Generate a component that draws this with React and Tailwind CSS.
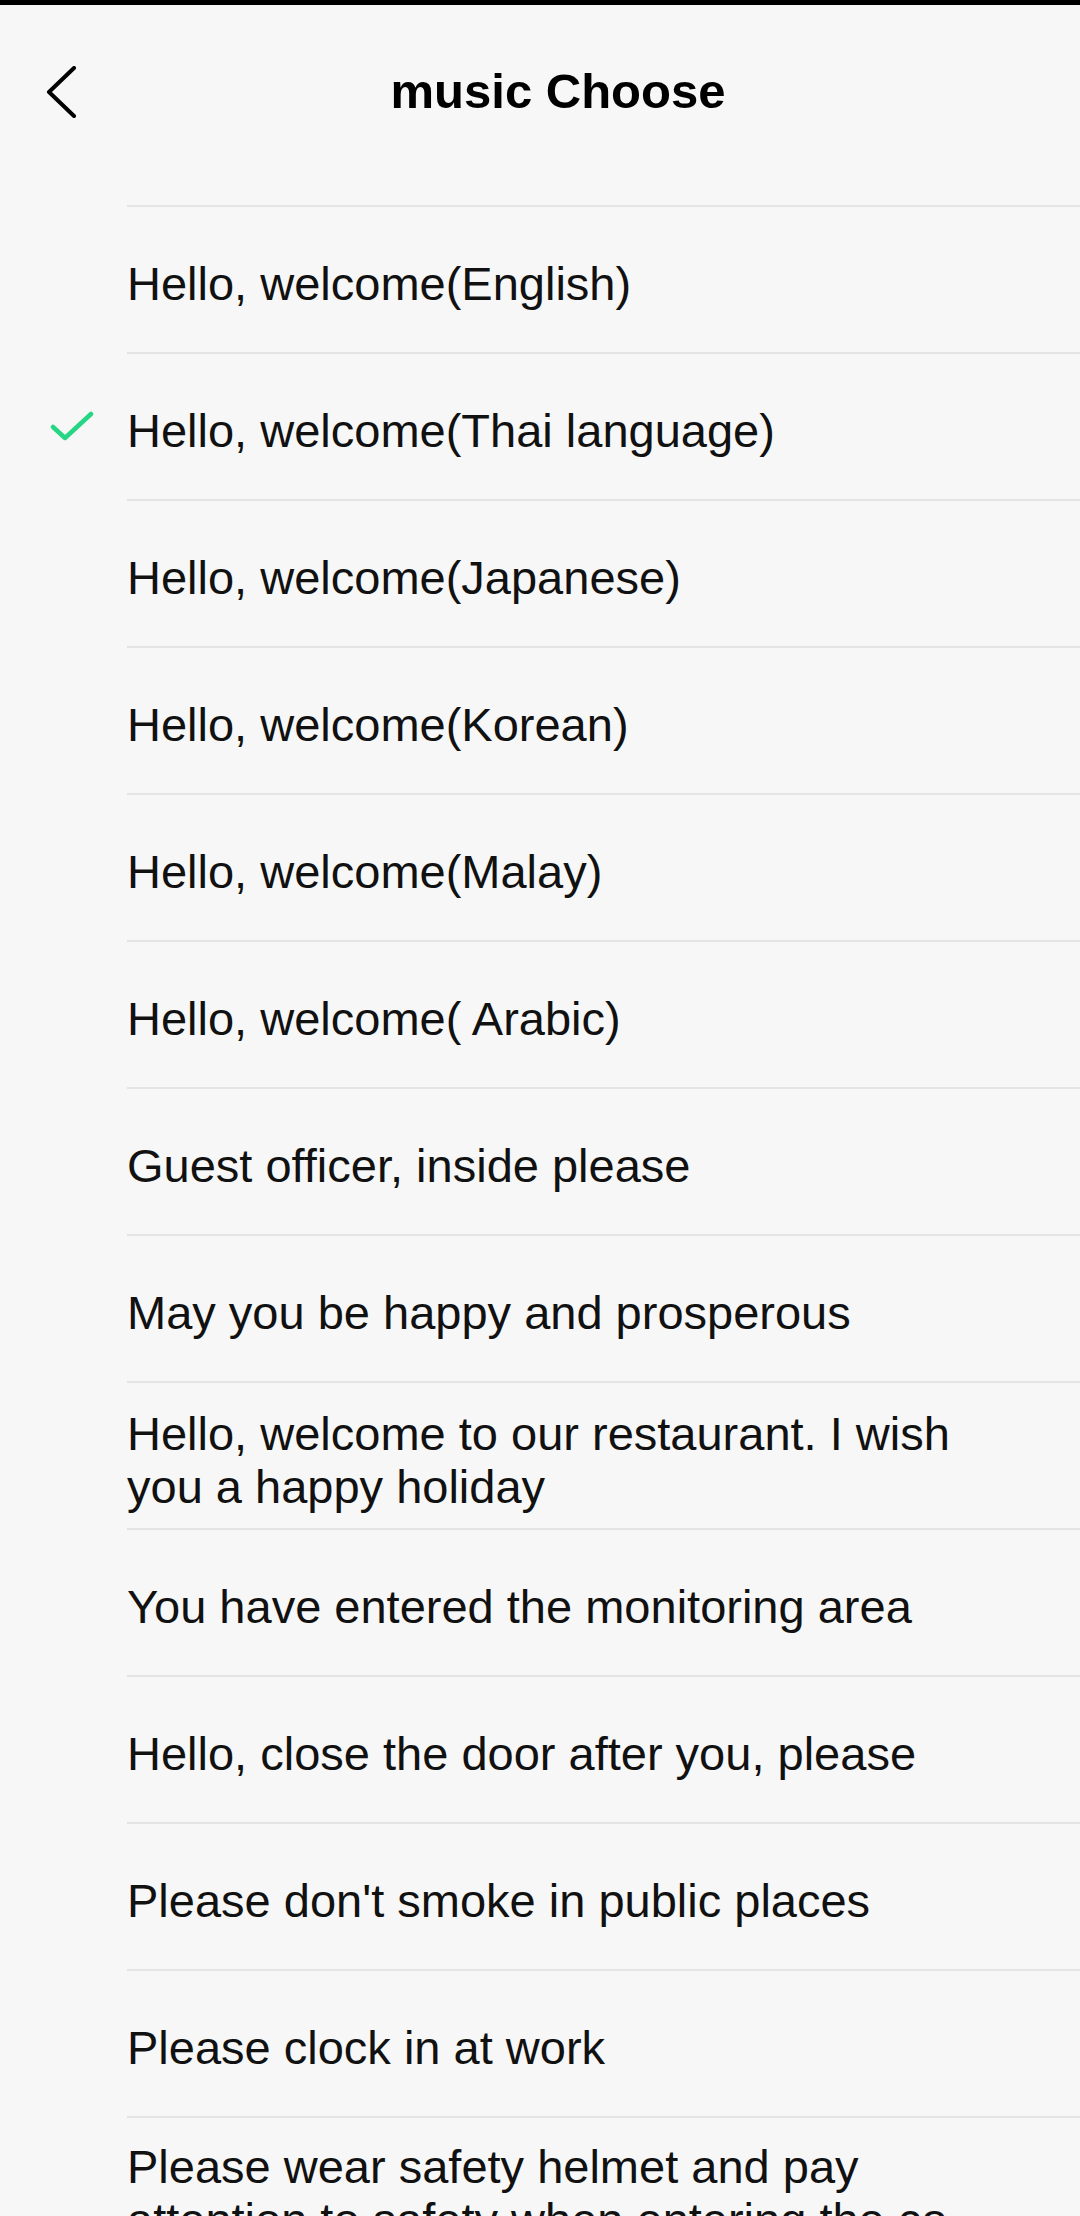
import React from "react";

const items = [
  "Hello, welcome(English)",
  "Hello, welcome(Thai language)",
  "Hello, welcome(Japanese)",
  "Hello, welcome(Korean)",
  "Hello, welcome(Malay)",
  "Hello, welcome( Arabic)",
  "Guest officer, inside please",
  "May you be happy and prosperous",
  "Hello, welcome to our restaurant. I wish you a happy holiday",
  "You have entered the monitoring area",
  "Hello, close the door after you, please",
  "Please don't smoke in public places",
  "Please clock in at work",
  "Please wear safety helmet and pay attention to safety when entering the co\u00ADnstruction site",
];

export default function App() {
  return (
    <div
      className="h-[2216px] w-[1080px] overflow-hidden bg-[#f7f7f7] text-[#111]"
      style={{ fontFamily: '"Liberation Sans", Arial, sans-serif' }}
    >
      <div className="h-[5px] bg-black" />
      <header className="flex h-[174px] items-center">
        <button className="flex w-[80px] items-center pl-[46px]">
          <svg width="32" height="52" viewBox="0 0 32 52" fill="none">
            <path
              d="M28 2 L3 26 L28 50"
              stroke="#000"
              strokeWidth="4"
              strokeLinecap="round"
              strokeLinejoin="round"
            />
          </svg>
        </button>
        <h1 className="flex-1 pr-[44px] text-center text-[49px] font-bold text-black">
          music Choose
        </h1>
      </header>
      <div className="mt-[26px]">
        {items.map((t, i) => (
          <div key={i} className="flex min-h-[147px]">
            <div className="flex w-[127px] items-center pl-[50px] pt-[2px]">
              {i === 1 && (
                <svg width="44" height="32" viewBox="0 0 44 32" fill="none">
                  <path
                    d="M3 16 L15 27 L41 3"
                    stroke="#27d685"
                    strokeWidth="4.5"
                    strokeLinecap="round"
                    strokeLinejoin="round"
                  />
                </svg>
              )}
            </div>
            <div className="flex flex-1 items-center border-t-2 border-[#e4e4e4] pb-[14px] pr-[60px] pt-[22px]">
              <span className="text-[47px] leading-[53px]">{t}</span>
            </div>
          </div>
        ))}
      </div>
    </div>
  );
}
